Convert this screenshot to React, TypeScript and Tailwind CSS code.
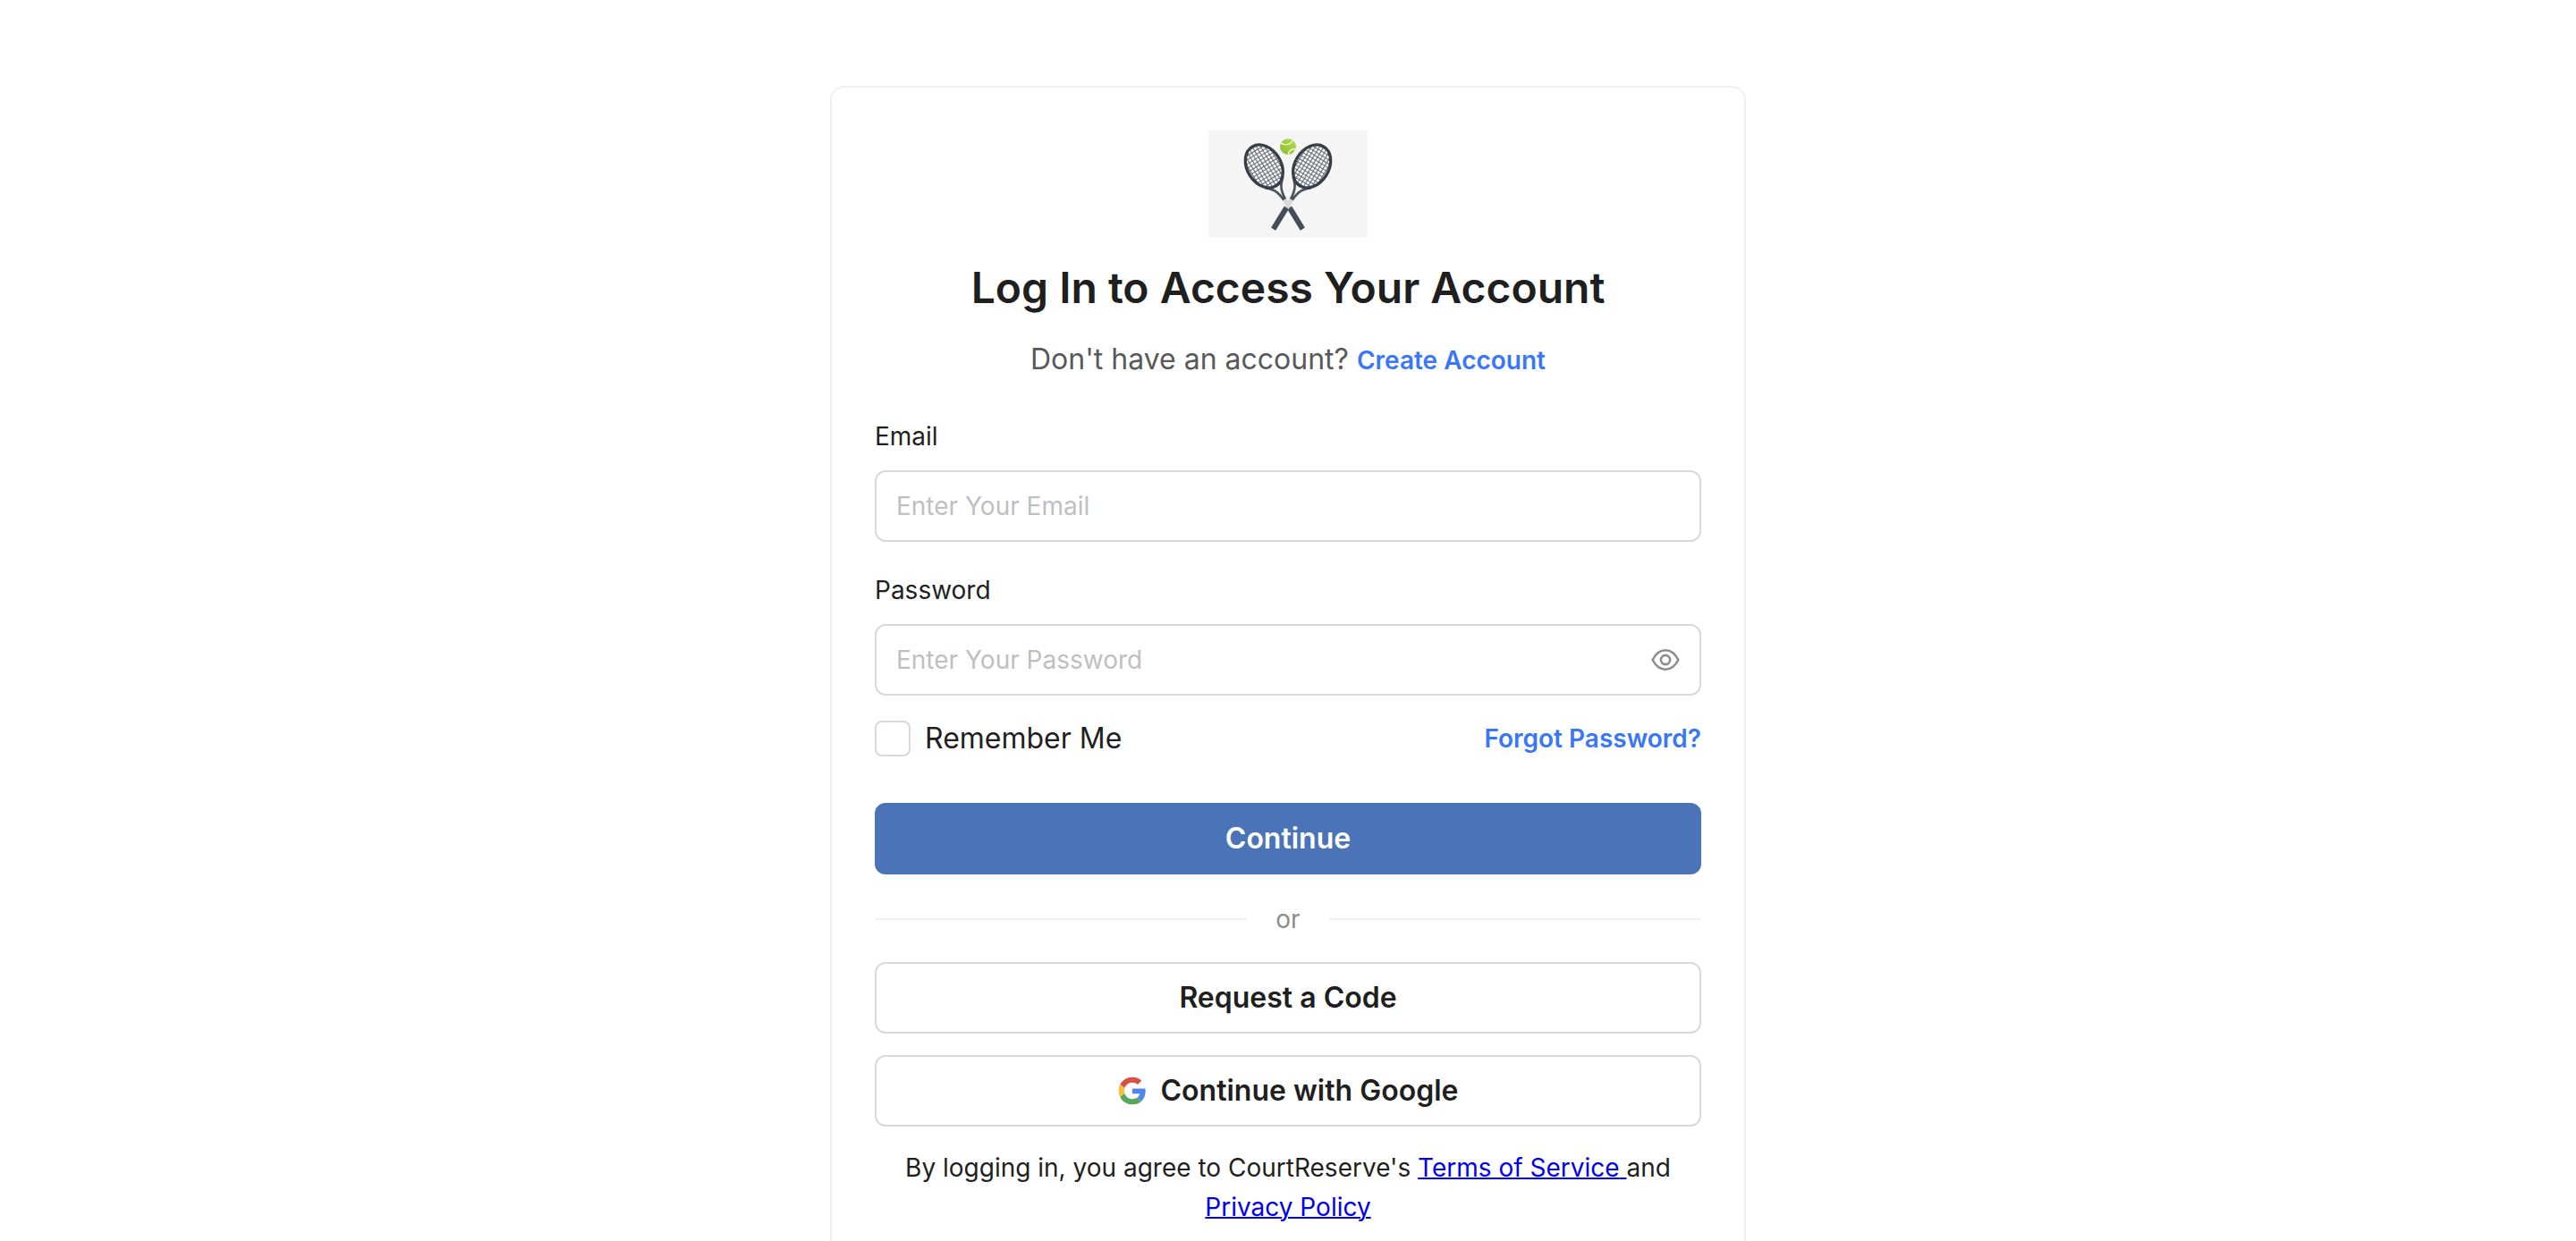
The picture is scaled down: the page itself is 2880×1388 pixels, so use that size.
import { useState } from "react";
import type { ReactNode } from "react";

const stringOffsets = [-84, -72, -60, -48, -36, -24, -12, 0, 12, 24, 36, 48, 60, 72, 84];

function Racket({ transform }: { transform: string }) {
  return (
    <g transform={transform}>
      <g clipPath="url(#head)">
        <ellipse rx="58" ry="78" fill="#fdfdfd" />
        <g stroke="#6f737b" strokeWidth="3.4">
          {stringOffsets.map((o) => (
            <g key={o}>
              <line x1={o} x2={o} y1="-84" y2="84" />
              <line x1="-84" x2="84" y1={o} y2={o} />
            </g>
          ))}
        </g>
      </g>
      <path d="M-36 62 C-16 80 -5 92 -3 132 M36 62 C16 80 5 92 3 132" fill="none" stroke="#4a525d" strokeWidth="8" />
      <ellipse rx="57" ry="77" fill="none" stroke="#363e48" strokeWidth="10" />
      <path d="M-7 131 L7 131 L9 168 L-9 168 Z" fill="#d9d9d9" />
      <rect x="-9" y="163" width="18" height="84" rx="2" fill="#454d58" />
    </g>
  );
}

function ClubLogo() {
  return (
    <svg viewBox="0 0 534 360" className="h-[120px] w-[178px] bg-[#f5f5f5]" role="img" aria-label="Crossed tennis rackets">
      <defs>
        <clipPath id="head">
          <ellipse rx="58" ry="78" />
        </clipPath>
        <clipPath id="ball">
          <circle cx="267" cy="54" r="27" />
        </clipPath>
        <linearGradient id="felt" x1="1" y1="0" x2="0" y2="1">
          <stop offset="0" stopColor="#b4dc50" />
          <stop offset="1" stopColor="#8fbb35" />
        </linearGradient>
      </defs>
      <Racket transform="translate(187 120) rotate(-31.5)" />
      <Racket transform="translate(347 120) rotate(31.5)" />
      <circle cx="267" cy="54" r="27" fill="url(#felt)" />
      <g clipPath="url(#ball)" fill="none" stroke="#f4f8e6" strokeWidth="4">
        <path d="M240 40 C252 50 278 52 284 28" />
        <path d="M268 84 C268 68 278 60 296 63" />
      </g>
    </svg>
  );
}

function EyeIcon() {
  return (
    <svg viewBox="0 0 36 36" className="size-9" fill="none" stroke="currentColor" strokeWidth="2.6" strokeLinejoin="round" aria-hidden="true">
      <path d="M3.6 18C7.4 10.6 12.2 7.3 18 7.3S28.6 10.6 32.4 18C28.6 25.4 23.8 28.7 18 28.7S7.4 25.4 3.6 18Z" />
      <circle cx="18" cy="18" r="5.1" />
    </svg>
  );
}

function GoogleMark() {
  return (
    <svg viewBox="-1 -1 50 50" className="size-8" aria-hidden="true">
      <path fill="#d95140" d="M24 9.5c3.54 0 6.71 1.22 9.21 3.6l6.85-6.85C35.9 2.38 30.47 0 24 0 14.62 0 6.51 5.38 2.56 13.22l7.98 6.19C12.43 13.72 17.74 9.5 24 9.5z" />
      <path fill="#5383ec" d="M46.98 24.55c0-1.57-.15-3.09-.38-4.55H24v9.02h12.94c-.58 2.96-2.26 5.48-4.78 7.18l7.73 6c4.51-4.18 7.09-10.36 7.09-17.65z" />
      <path fill="#f1bf42" d="M10.53 28.59c-.48-1.45-.76-2.99-.76-4.59s.27-3.14.76-4.59l-7.98-6.19C.92 16.46 0 20.12 0 24c0 3.88.92 7.54 2.56 10.78l7.97-6.19z" />
      <path fill="#58a55c" d="M24 48c6.48 0 11.93-2.13 15.89-5.81l-7.73-6c-2.15 1.45-4.92 2.3-8.16 2.3-6.26 0-11.57-4.22-13.47-9.91l-7.98 6.19C6.51 42.62 14.62 48 24 48z" />
    </svg>
  );
}

function OutlineButton({ children }: { children: ReactNode }) {
  return (
    <button
      type="button"
      className="flex h-20 w-full items-center justify-center gap-4 rounded-xl border-2 border-[#d9d9d9] bg-white text-[32px] font-semibold text-[#1f1f1f]"
    >
      {children}
    </button>
  );
}

const fieldClass =
  "block h-20 w-full rounded-xl border-2 border-[#d9d9d9] bg-white pl-[22px] text-[28px] text-[#1f1f1f] placeholder:text-[#bfbfbf]";

export default function App() {
  const [visible, setVisible] = useState(false);

  return (
    <main className="min-h-screen bg-white px-6 pt-24 font-['Inter',sans-serif] text-[28px] leading-[44px] text-[#1f1f1f] [font-optical-sizing:none]">
      <form
        className="mx-auto w-full max-w-[1024px] rounded-2xl border-2 border-[#f0f0f0] bg-white p-12"
        onSubmit={(e) => e.preventDefault()}
      >
        <header className="flex flex-col items-center text-center">
          <ClubLogo />
          <h1 className="mt-6 text-5xl leading-[64px] font-semibold">Log In to Access Your Account</h1>
          <p className="mt-6 text-[32px] leading-[48px] text-[#58595b]">
            Don't have an account?{" "}
            <a href="#create" className="text-[28px] leading-none font-semibold text-[#3a77f7]">
              Create Account
            </a>
          </p>
        </header>

        <div className="mt-10">
          <label htmlFor="email" className="mb-4 block">
            Email
          </label>
          <input id="email" type="email" placeholder="Enter Your Email" className={fieldClass} />
        </div>

        <div className="mt-8">
          <label htmlFor="password" className="mb-4 block">
            Password
          </label>
          <div className="relative">
            <input
              id="password"
              type={visible ? "text" : "password"}
              placeholder="Enter Your Password"
              className={fieldClass}
            />
            <button
              type="button"
              aria-label="Show password"
              onClick={() => setVisible(!visible)}
              className="absolute inset-y-0 right-[22px] flex items-center text-[#8c8c8c]"
            >
              <EyeIcon />
            </button>
          </div>
        </div>

        <div className="mt-7 flex h-10 items-center justify-between">
          <label className="flex items-center gap-4 text-[32px]">
            <input
              type="checkbox"
              className="size-10 appearance-none rounded-lg border-2 border-[#d9d9d9] bg-white checked:bg-[#4b74b8]"
            />
            Remember Me
          </label>
          <a href="#forgot" className="font-semibold text-[#3a77f7]">
            Forgot Password?
          </a>
        </div>

        <button
          type="submit"
          className="mt-[52px] flex h-20 w-full items-center justify-center rounded-xl bg-[#4b74b8] text-[32px] font-semibold text-white"
        >
          Continue
        </button>

        <div className="mt-7 mb-[26px] flex items-center gap-8 text-[#8c8c8c]">
          <span className="h-0.5 flex-1 bg-[#f0f0f0]" />
          or
          <span className="h-0.5 flex-1 bg-[#f0f0f0]" />
        </div>

        <div className="flex flex-col gap-6">
          <OutlineButton>Request a Code</OutlineButton>
          <OutlineButton>
            <GoogleMark />
            Continue with Google
          </OutlineButton>
        </div>

        <p className="mt-6 px-6 text-center">
          By logging in, you agree to CourtReserve's{" "}
          <a href="#terms" className="text-[#0000ee] underline decoration-2">
            Terms of Service{" "}
          </a>
          and{" "}
          <a href="#privacy" className="text-[#0000ee] underline decoration-2">
            Privacy Policy
          </a>
        </p>
      </form>
    </main>
  );
}
